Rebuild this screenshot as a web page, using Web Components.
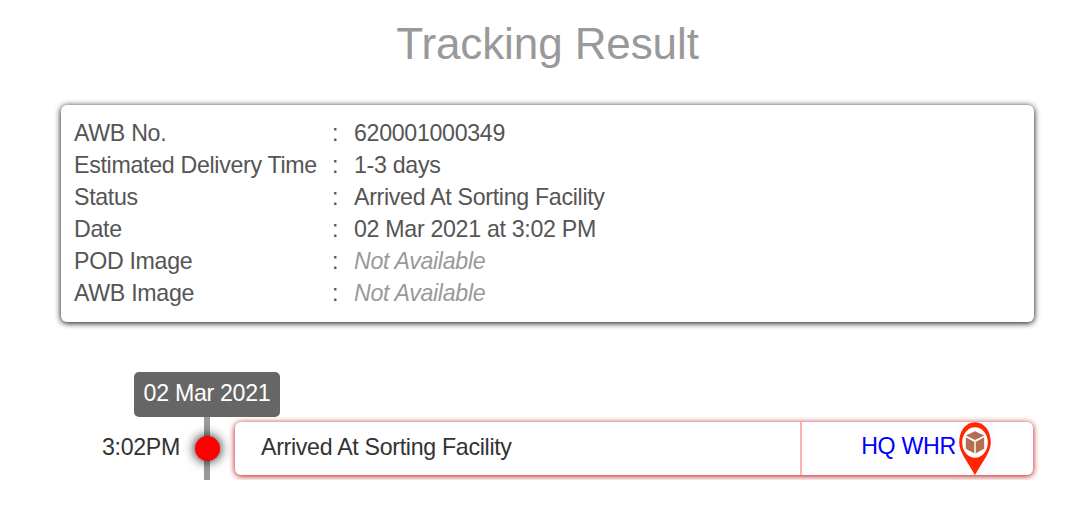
<!DOCTYPE html>
<html lang="en">
<head>
<meta charset="utf-8">
<title>Tracking Result</title>
<style>
    body {
        margin: 0;
        background: #fff;
        color: #333;
        font: 23.2px/32px "Liberation Sans", Arial, sans-serif;
        letter-spacing: -.31px;
    }
</style>
</head>
<body>

<template id="page_template">
    <style>
        :host {
            display: block;
            padding: 18px 45px 0 61px;
        }
        h1 {
            margin: 0 0 35px;
            font-size: 44px;
            font-weight: normal;
            line-height: 52px;
            letter-spacing: -.1px;
            text-align: center;
            color: #999;
        }
    </style>
    <h1>Tracking Result</h1>
    <slot></slot>
</template>

<template id="summary_template">
    <style>
        :host {
            display: block;
            box-sizing: border-box;
            height: 217px;
            padding: 12px 13px;
            border-radius: 6px;
            color: #555;
            box-shadow: 0 1px 6px #000;
        }
    </style>
    <slot></slot>
</template>

<template id="row_template">
    <style>
        :host {
            display: grid;
            grid-template-columns: 258px 22px 1fr;
            white-space: nowrap;
        }
        :host([missing]) .value {
            font-style: italic;
            color: #999;
        }
    </style>
    <span class="label"></span>
    <span>:</span>
    <span class="value"><slot></slot></span>
</template>

<template id="timeline_template">
    <style>
        :host {
            display: block;
            margin-top: 50px;
        }
        .date {
            box-sizing: border-box;
            width: 146px;
            height: 45px;
            margin-left: 73px;
            padding-top: 5px;
            border-radius: 5px;
            background: #666;
            color: #fff;
            text-align: center;
        }
    </style>
    <div class="date"></div>
    <slot></slot>
</template>

<template id="event_template">
    <style>
        :host {
            display: flex;
            height: 63px;
        }
        .time {
            width: 119px;
            padding-top: 14px;
            text-align: right;
        }
        .rail {
            display: flex;
            justify-content: center;
            width: 6px;
            margin-left: 24px;
            background: #999;
        }
        .dot {
            flex: none;
            width: 25px;
            height: 25px;
            margin-top: 19px;
            border-radius: 50%;
            background: #f00;
            box-shadow: 0 0 12px #000;
        }
        .card {
            display: flex;
            width: 798px;
            height: 53px;
            margin: 5px 0 0 25px;
            border-radius: 6px;
            background: #fff;
            box-shadow: 0 1px 6px #b80000;
        }
        .text {
            width: 539px;
            padding: 9px 0 0 26px;
            border-right: 2px solid #ffb0b0;
        }
        .place {
            display: flex;
            justify-content: center;
            flex: 1;
            padding-left: 21px;
            color: #00f;
        }
        .place span {
            margin-right: -1px;
            padding-top: 8px;
        }
    </style>
    <div class="time"></div>
    <div class="rail"><div class="dot"></div></div>
    <div class="card">
        <div class="text"><slot></slot></div>
        <div class="place"><span></span><parcel-pin></parcel-pin></div>
    </div>
</template>

<template id="pin_template">
    <style>
        :host {
            display: block;
            width: 40px;
            height: 53px;
            background: #fcfbff;
        }
        svg {
            display: block;
        }
    </style>
    <svg width="40" height="53" viewBox="0 0 40 53">
        <path d="M20 .2C10.500 .2 4.200 9 4.200 20.500C4.200 30 12 39 20 53C28 39 35.800 30 35.800 20.500C35.800 9 29.500 .2 20 .2Z" fill="#ff2600"/>
        <ellipse cx="20" cy="20.500" rx="12.800" ry="15.300" fill="#fff"/>
        <path d="M20 9.200L29.200 13.500L20 18L10.800 13.500Z" fill="#b66d55"/>
        <path d="M10.800 15.300L19 19.700V31.300L10.800 26.700Z" fill="#b66d55"/>
        <path d="M29.200 15.300L21 19.700V31.300L29.200 26.700Z" fill="#b66d55"/>
        <path d="M20 19.500V31.500" stroke="#e4cf9c" stroke-width="1.500"/>
    </svg>
</template>

<tracking-page>
    <tracking-summary>
        <summary-row label="AWB No.">620001000349</summary-row>
        <summary-row label="Estimated Delivery Time">1-3 days</summary-row>
        <summary-row label="Status">Arrived At Sorting Facility</summary-row>
        <summary-row label="Date">02 Mar 2021 at 3:02 PM</summary-row>
        <summary-row label="POD Image" missing>Not Available</summary-row>
        <summary-row label="AWB Image" missing>Not Available</summary-row>
    </tracking-summary>
    <tracking-timeline date="02 Mar 2021">
        <tracking-event time="3:02PM" place="HQ WHR">Arrived At Sorting Facility</tracking-event>
    </tracking-timeline>
</tracking-page>

<script>
    (function (customElements) {
        'use strict'

        class BaseElement extends HTMLElement {
            constructor(templateId) {
                super();
                const templ = document.querySelector(templateId);
                this.attachShadow({ mode: 'open' }).appendChild(document.importNode(templ.content, true));
            }

            // Copies an attribute into a node of the shadow root
            fill(selector, attr) {
                this.shadowRoot.querySelector(selector).textContent = this.getAttribute(attr);
            }
        }

        class TrackingPage extends BaseElement {
            constructor() { super('#page_template'); }
        }

        class TrackingSummary extends BaseElement {
            constructor() { super('#summary_template'); }
        }

        class SummaryRow extends BaseElement {
            constructor() { super('#row_template'); }

            connectedCallback() {
                this.fill('.label', 'label');
            }
        }

        class TrackingTimeline extends BaseElement {
            constructor() { super('#timeline_template'); }

            connectedCallback() {
                this.fill('.date', 'date');
            }
        }

        class TrackingEvent extends BaseElement {
            constructor() { super('#event_template'); }

            connectedCallback() {
                this.fill('.time', 'time');
                this.fill('.place span', 'place');
            }
        }

        class ParcelPin extends BaseElement {
            constructor() { super('#pin_template'); }
        }

        customElements.define('parcel-pin', ParcelPin);
        customElements.define('tracking-page', TrackingPage);
        customElements.define('tracking-summary', TrackingSummary);
        customElements.define('summary-row', SummaryRow);
        customElements.define('tracking-timeline', TrackingTimeline);
        customElements.define('tracking-event', TrackingEvent);
    })(window.customElements);
</script>
</body>
</html>
